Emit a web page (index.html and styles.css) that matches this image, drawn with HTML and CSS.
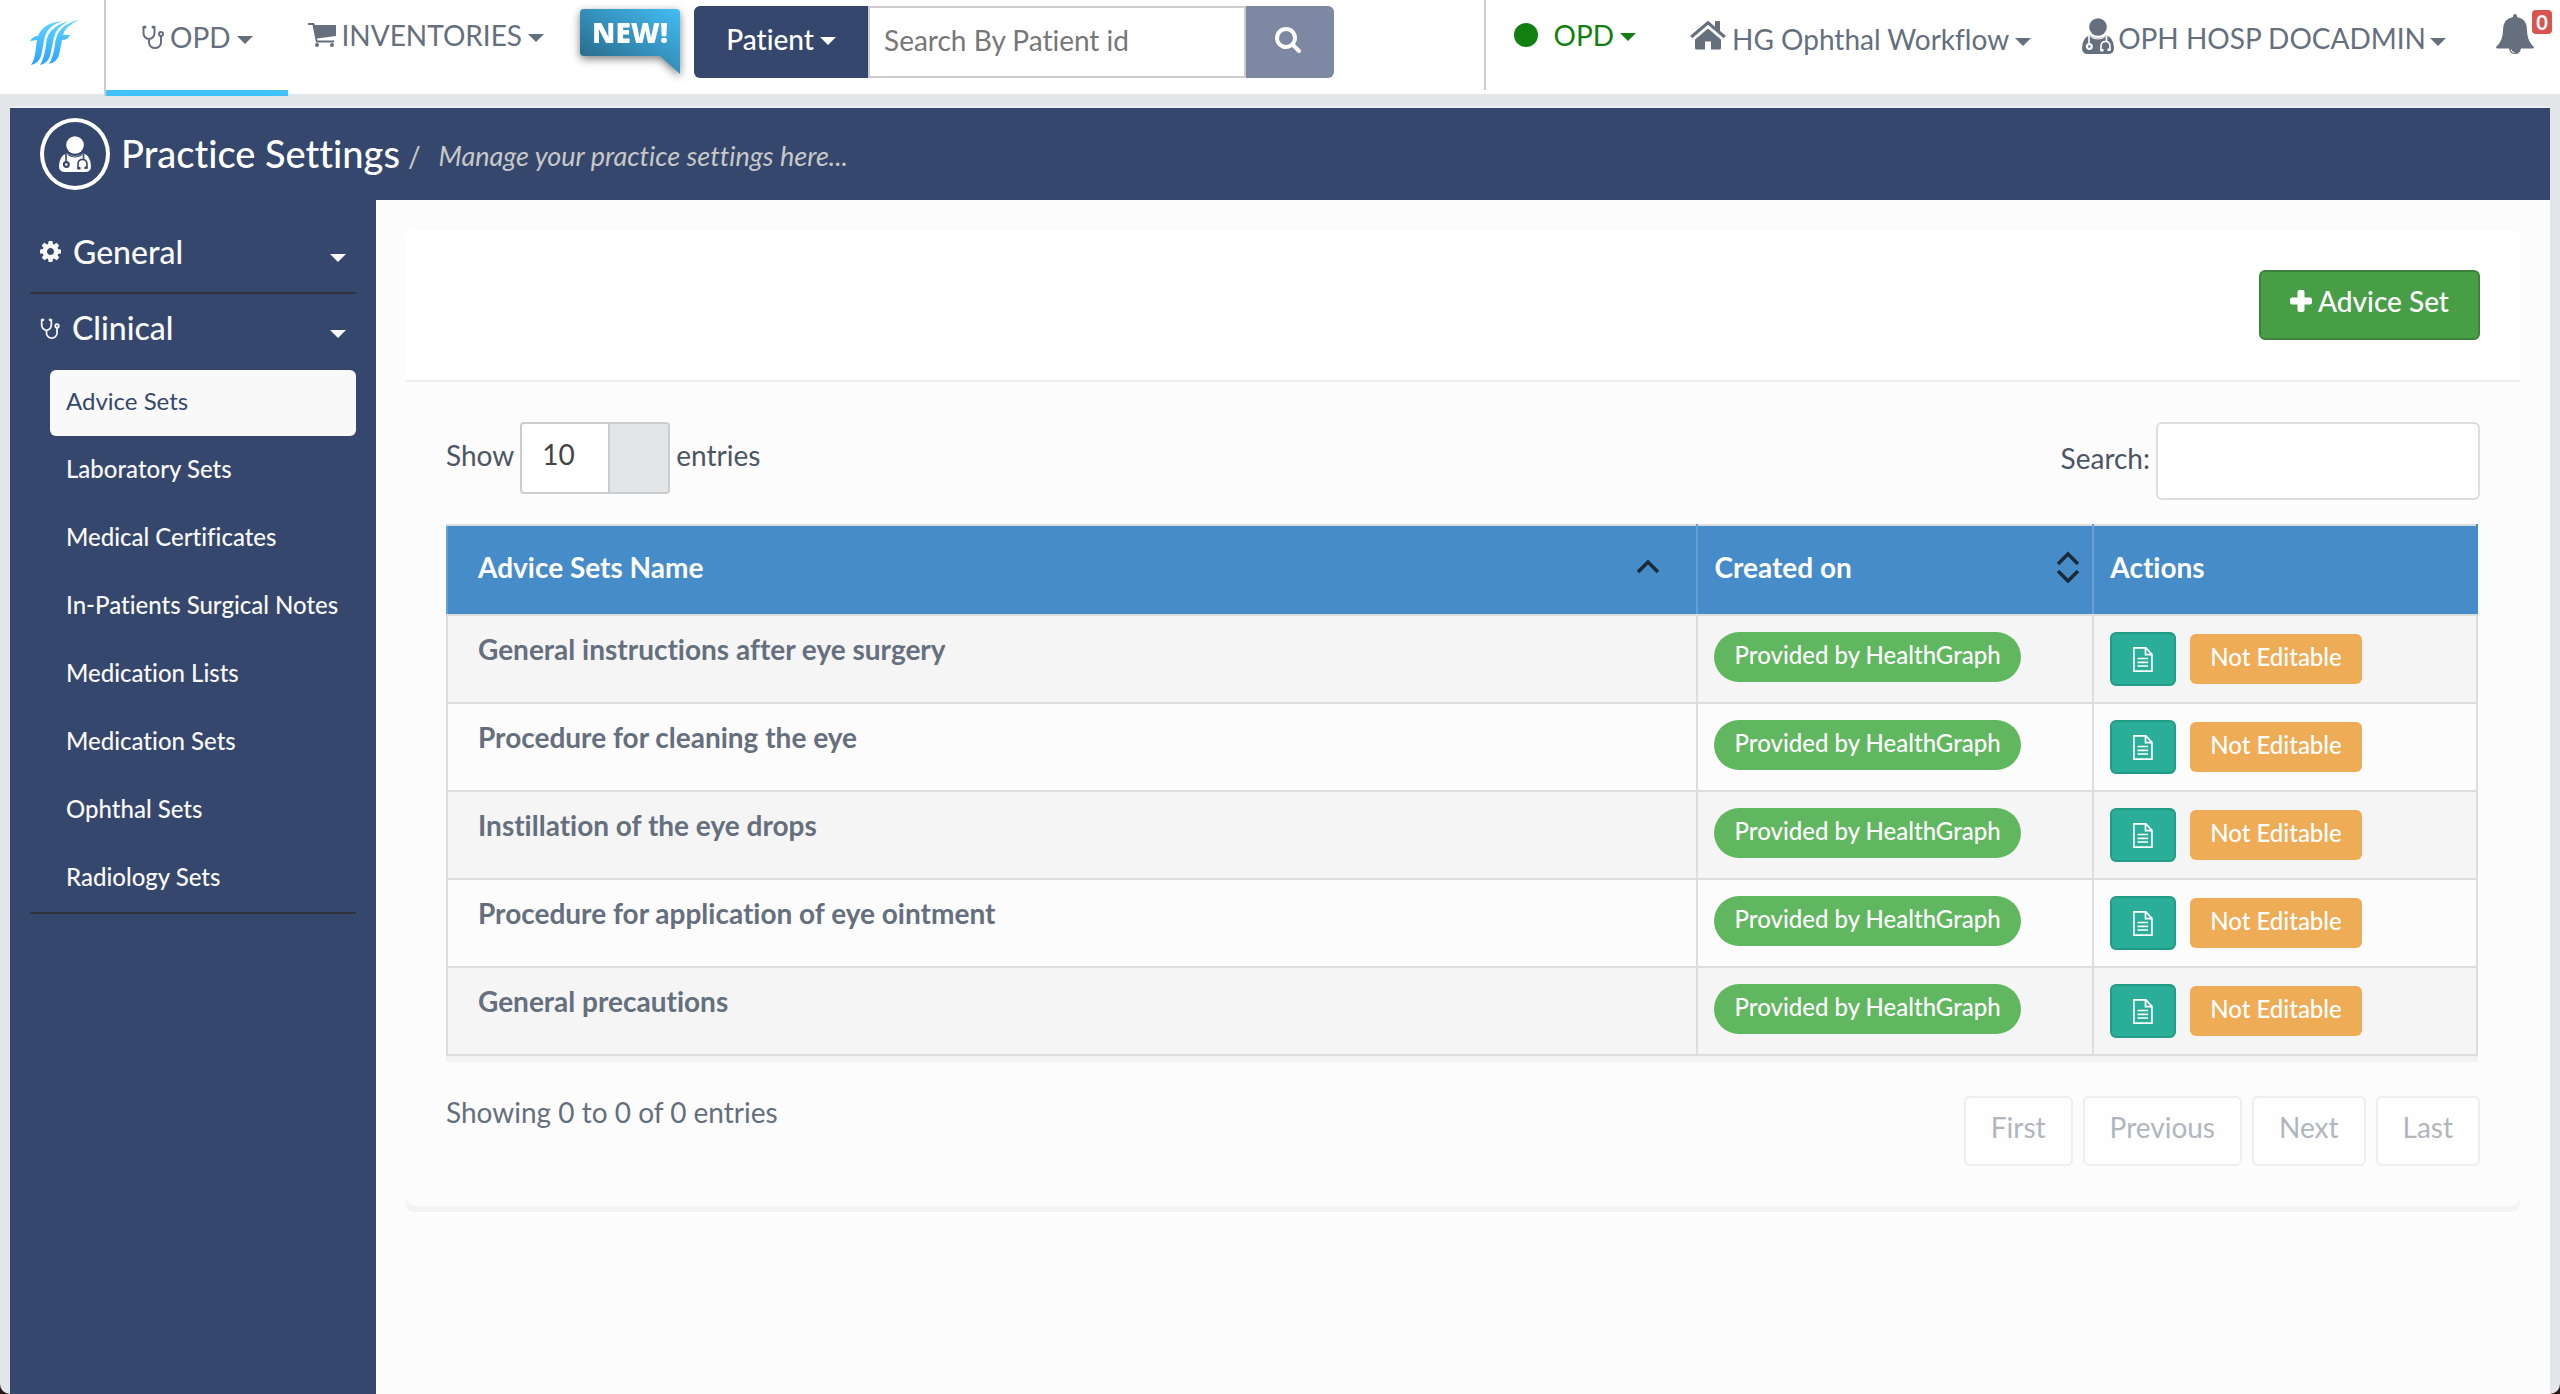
FILE: index.html
```html
<!DOCTYPE html>
<html lang="en">
<head>
<meta charset="utf-8">
<title>Practice Settings</title>
<link rel="stylesheet" href="styles.css">
</head>
<body>
<svg class="sprite" aria-hidden="true">
  <defs>
    <linearGradient id="logo-fill" x1="0" y1="0" x2="0" y2="1"><stop offset="0" stop-color="#5fd4ff"/><stop offset="1" stop-color="#2fa2ff"/></linearGradient>
    <linearGradient id="new-fill" x1="0" y1="1" x2="1" y2="0"><stop offset="0" stop-color="#26607c"/><stop offset="1" stop-color="#43bdf6"/></linearGradient>
  </defs>
  <symbol id="i-steth" viewBox="0 0 22 24">
    <g fill="none" stroke="currentColor" stroke-width="2" stroke-linecap="round">
      <path d="M3 2H1.500V8a5.500 6 0 0 0 11 0V2H11M7 14v3.500a6 5.500 0 0 0 12 0V11"/>
      <circle cx="19" cy="9" r="2"/>
    </g>
    <circle cx="3" cy="2" r="1.500" fill="currentColor"/><circle cx="11" cy="2" r="1.500" fill="currentColor"/>
  </symbol>
  <symbol id="i-cart" viewBox="0 0 28 24">
    <path fill="currentColor" d="M0 0h6l1 2h21v11L9 15.500l.5 2H26v2H8L4.500 2H0z"/>
    <circle cx="9" cy="22" r="2" fill="currentColor"/><circle cx="24" cy="22" r="2" fill="currentColor"/>
  </symbol>
  <symbol id="i-doctor" viewBox="0 0 32 36">
    <circle cx="16" cy="9" r="8.800" fill="currentColor"/>
    <path fill="currentColor" d="M8 17.500q3 2.500 8 2.500t8-2.500q7.500 1.500 8 12.500 0 6-6 6H6q-6 0-6-6 .5-11 8-12.500z"/>
    <g fill="none" stroke="var(--icon-bg)" stroke-width="1.600">
      <circle cx="7.300" cy="28.500" r="2.400" stroke-width="2.200"/>
      <path d="M7 18v8.500M24.500 18v5M19 33v-4.500q0-5 4.500-5t4.500 5V32"/>
      <path d="M20 31v2.500M27 30.500v2.500" stroke-width="3"/>
      <path d="M8.500 18.500q3 2.500 7.500 2.500t7.500-2.500" stroke-width="1"/>
    </g>
  </symbol>
  <symbol id="i-home" viewBox="0 0 36 30">
    <path fill="currentColor" d="M18 8.500 31 19.500V28q0 1.500-1.500 1.500H21v-8h-6v8H6.500Q5 29.500 5 28v-8.500z"/>
    <path fill="none" stroke="currentColor" stroke-width="3" d="M1.200 17 18 2.800 34.800 17"/>
    <path fill="currentColor" d="M25 1h5v11l-5-4.500z"/>
  </symbol>
  <symbol id="i-bell" viewBox="0 0 38 40">
    <path fill="currentColor" d="M19 0q2 0 2 3 10 1.500 10 13 0 11 7 17 0 1.500-2 1.500H2Q0 34.500 0 33q7-6 7-17Q7 4.500 17 3q0-3 2-3zM13 34.500h12q-1 5.500-6 5.500t-6-5.500z"/>
    <path fill="none" stroke="#fff" d="M15 35.500q.5 3 3.500 3"/>
  </symbol>
  <symbol id="i-search" viewBox="64 128 1664 1664">
    <path fill="currentColor" d="M1216 832q0-185-131.500-316.500t-316.500-131.500-316.500 131.500-131.500 316.500 131.500 316.500 316.500 131.500 316.500-131.500 131.500-316.500zm512 832q0 52-38 90t-90 38q-54 0-90-38l-343-342q-179 124-399 124-143 0-273.500-55.500t-225-150-150-225-55.500-273.500 55.500-273.500 150-225 225-150 273.500-55.500 273.500 55.500 225 150 150 225 55.500 273.500q0 220-124 399l343 343q37 37 37 90z"/>
  </symbol>
  <symbol id="i-cog" viewBox="128 128 1536 1536">
    <path fill="currentColor" d="M1152 896q0-106-75-181t-181-75-181 75-75 181 75 181 181 75 181-75 75-181zm512-109v222q0 12-8 23t-20 13l-185 28q-19 54-39 91 35 50 107 138 10 12 10 25t-9 23q-27 37-99 108t-94 71q-12 0-26-9l-138-108q-44 23-91 38-16 136-29 186-7 28-36 28h-222q-14 0-24.500-8.500t-11.500-21.500l-28-184q-49-16-90-37l-141 107q-10 9-25 9-14 0-25-11-126-114-165-168-7-10-7-23 0-12 8-23 15-21 51-66.500t54-70.500q-27-50-41-99l-183-27q-13-2-21-12.500t-8-23.500v-222q0-12 8-23t19-13l186-28q14-46 39-92-40-57-107-138-10-12-10-24 0-10 9-23 26-36 98.500-107.500t94.500-71.500q13 0 26 10l138 107q44-23 91-38 16-136 29-186 7-28 36-28h222q14 0 24.500 8.500t11.500 21.500l28 184q49 16 90 37l142-107q9-9 24-9 13 0 25 10 129 119 165 170 7 8 7 22 0 12-8 23-15 21-51 66.500t-54 70.500q26 50 41 98l183 28q13 2 21 12.500t8 23.500z"/>
  </symbol>
  <symbol id="i-plus" viewBox="0 0 22 22">
    <path fill="currentColor" d="M9.500 0h3q2 0 2 2v5.500H20q2 0 2 2v3q0 2-2 2h-5.500V20q0 2-2 2h-3q-2 0-2-2v-5.500H2q-2 0-2-2v-3q0-2 2-2h5.500V2q0-2 2-2z"/>
  </symbol>
  <symbol id="i-file" viewBox="0 0 22 25">
    <g fill="none" stroke="currentColor" stroke-width="1.700">
      <path d="M1.900.9h12l6 6.500v16.700h-18zM13.500 1v6.700H20M5.500 11.500h10.500M5.500 15.300h10.500M5.500 19h10.500"/>
    </g>
  </symbol>
  <symbol id="i-sort" viewBox="0 0 24 32">
    <path fill="none" stroke="#1b2a38" stroke-width="3.500" d="M2 13 12 3l10 10M2 20l10 10 10-10"/>
  </symbol>
  <symbol id="i-up" viewBox="0 0 24 32">
    <path fill="none" stroke="#1b2a38" stroke-width="3.500" d="M2 21 12 11l10 10"/>
  </symbol>
</svg>

<header class="topbar">
  <a class="brand" href="#" aria-label="Home">
    <svg width="50" height="46" viewBox="0 0 50 46" fill="url(#logo-fill)">
      <path d="M1 45q4-6 5-18l1-7-7 1q3-5 8-5Q13 3 32 1q-14 5-17 15l-4 20q-2 7-10 9z"/>
      <path d="M10 45q4-6 5-18 1-20 24-26-13 6-15 16l-4 19q-2 7-10 9z"/>
      <path d="M19 44q4-6 5-18Q27 4 49 0 35 6 33 15h7q-2 5-8 5l-3 15q-2 7-10 9z"/>
      <g fill="none" stroke="#fff"><path d="M9 44q6-8 7-24Q19 6 34 1M18 43q6-8 7-23Q28 6 42 1"/></g>
    </svg>
  </a>
  <nav class="mainnav">
    <a class="nav-item active" href="#"><svg width="22" height="24"><use href="#i-steth"/></svg>OPD<span class="caret"></span></a>
    <a class="nav-item inventories" href="#"><svg width="28" height="24"><use href="#i-cart"/></svg>INVENTORIES<span class="caret"></span></a>
    <a class="new-flag" href="#">
      <svg width="100" height="65" viewBox="0 0 100 65"><path fill="url(#new-fill)" d="M4 0h92q4 0 4 4v61L80 47H4q-4 0-4-4V4q0-4 4-4z"/></svg>
      <span>NEW!</span>
    </a>
  </nav>
  <form class="patient-search">
    <button class="btn-patient" type="button">Patient<span class="caret"></span></button>
    <input type="text" placeholder="Search By Patient id" aria-label="Search By Patient id">
    <button class="btn-search" type="submit" aria-label="Search"><svg width="26" height="26"><use href="#i-search"/></svg></button>
  </form>
  <div class="account">
    <a class="status" href="#"><span class="dot"></span>OPD<span class="caret"></span></a>
    <a class="clinic" href="#"><svg width="36" height="30"><use href="#i-home"/></svg>HG Ophthal Workflow<span class="caret"></span></a>
    <a class="user" href="#"><svg width="32" height="36"><use href="#i-doctor"/></svg>OPH HOSP DOCADMIN<span class="caret"></span></a>
    <a class="alerts" href="#" aria-label="Notifications"><svg width="38" height="40"><use href="#i-bell"/></svg><span class="count">0</span></a>
  </div>
</header>

<div class="page">
  <div class="titlebar">
    <span class="avatar"><svg width="32" height="36"><use href="#i-doctor"/></svg></span>
    <h1>Practice Settings</h1>
    <span class="slash">/</span>
    <p>Manage your practice settings here...</p>
  </div>
  <div class="body">
    <aside class="sidebar">
      <button class="group" type="button"><svg width="21" height="21"><use href="#i-cog"/></svg>General<span class="caret"></span></button>
      <section class="open">
        <button class="group" type="button"><svg width="20" height="21"><use href="#i-steth"/></svg>Clinical<span class="caret"></span></button>
        <ul>
          <li><a class="current" href="#">Advice Sets</a></li>
          <li><a href="#">Laboratory Sets</a></li>
          <li><a href="#">Medical Certificates</a></li>
          <li><a href="#">In-Patients Surgical Notes</a></li>
          <li><a href="#">Medication Lists</a></li>
          <li><a href="#">Medication Sets</a></li>
          <li><a href="#">Ophthal Sets</a></li>
          <li><a href="#">Radiology Sets</a></li>
        </ul>
      </section>
    </aside>
    <main>
      <div class="panel">
        <div class="panel-head">
          <button class="btn-add" type="button"><svg width="22" height="22"><use href="#i-plus"/></svg>Advice Set</button>
        </div>
        <div class="panel-body">
          <div class="tools">
            <label><span>Show</span><select><option>10</option><option>25</option><option>50</option></select><span>entries</span></label>
            <label><span>Search:</span><input type="search"></label>
          </div>
          <table>
            <thead>
              <tr>
                <th class="col-name"><div>Advice Sets Name<svg width="24" height="32"><use href="#i-up"/></svg></div></th>
                <th class="col-created"><div>Created on<svg width="24" height="32"><use href="#i-sort"/></svg></div></th>
                <th class="col-actions"><div>Actions</div></th>
              </tr>
            </thead>
            <tbody>
              <tr><td>General instructions after eye surgery</td><td><span class="source">Provided by HealthGraph</span></td><td><div class="actions"><button type="button" aria-label="View"><svg width="22" height="25"><use href="#i-file"/></svg></button><span class="locked">Not Editable</span></div></td></tr>
              <tr><td>Procedure for cleaning the eye</td><td><span class="source">Provided by HealthGraph</span></td><td><div class="actions"><button type="button" aria-label="View"><svg width="22" height="25"><use href="#i-file"/></svg></button><span class="locked">Not Editable</span></div></td></tr>
              <tr><td>Instillation of the eye drops</td><td><span class="source">Provided by HealthGraph</span></td><td><div class="actions"><button type="button" aria-label="View"><svg width="22" height="25"><use href="#i-file"/></svg></button><span class="locked">Not Editable</span></div></td></tr>
              <tr><td>Procedure for application of eye ointment</td><td><span class="source">Provided by HealthGraph</span></td><td><div class="actions"><button type="button" aria-label="View"><svg width="22" height="25"><use href="#i-file"/></svg></button><span class="locked">Not Editable</span></div></td></tr>
              <tr><td>General precautions</td><td><span class="source">Provided by HealthGraph</span></td><td><div class="actions"><button type="button" aria-label="View"><svg width="22" height="25"><use href="#i-file"/></svg></button><span class="locked">Not Editable</span></div></td></tr>
            </tbody>
          </table>
          <div class="foot">
            <p>Showing 0 to 0 of 0 entries</p>
            <div class="pager">
              <button type="button" disabled>First</button>
              <button type="button" disabled>Previous</button>
              <button type="button" disabled>Next</button>
              <button type="button" disabled>Last</button>
            </div>
          </div>
        </div>
      </div>
    </main>
  </div>
</div>
</body>
</html>
```
FILE: styles.css
```css
:root {
  --navy: #35476d;
  --slate: #656f7d;
  --line: #dddddd;
  --mist: #e2e6e9;
  --icon-bg: #ffffff;
}

* { box-sizing: border-box; }

html { background: #2a1a16; }

body {
  margin: 0;
  min-height: 100vh;
  display: flex;
  flex-direction: column;
  background: var(--mist);
  border-radius: 0 0 10px 10px;
  overflow: hidden;
  font-family: Lato, "Liberation Sans", sans-serif;
  font-size: 28px;
  line-height: 32px;
  font-variant-ligatures: none;
  color: var(--slate);
}

.sprite { position: absolute; width: 0; height: 0; }

a { color: inherit; text-decoration: none; }
button, input, select { font: inherit; font-variant-ligatures: none; color: inherit; }
button { cursor: pointer; border: 0; background: none; padding: 0; }
svg { flex: none; display: block; }
h1, p, ul { margin: 0; padding: 0; }

.caret {
  flex: none;
  width: 16px;
  border: 8px solid transparent;
  border-top-color: currentColor;
  border-bottom: 0;
}

/* Top bar */
.topbar {
  display: flex;
  align-items: flex-start;
  height: 94px;
  background: #fff;
}

.brand {
  width: 106px;
  height: 96px;
  padding: 20px 0 0 30px;
  border-right: 2px solid #ccc;
}

.mainnav { display: flex; align-items: flex-start; }

.nav-item { display: flex; align-items: center; gap: 6px; height: 96px; padding: 0 35px 22px 36px; }
.nav-item.active { border-bottom: 6px solid #42c2fb; padding-bottom: 16px; }
.nav-item.inventories { padding: 0 36px 26px 20px; }
.nav-item .caret { margin-top: 6px; }

.new-flag {
  display: grid;
  margin-top: 9px;
  filter: drop-shadow(0 3px 4px rgba(0, 0, 0, .5));
  color: #fff;
  font: 800 28px/46px "Open Sans", sans-serif;
  text-align: center;
}
.new-flag > * { grid-area: 1 / 1; }

.patient-search {
  display: flex;
  width: 640px;
  height: 72px;
  margin: 6px 0 0 14px;
}
.btn-patient {
  display: flex;
  align-items: center;
  justify-content: center;
  gap: 6px;
  width: 174px;
  padding-bottom: 6px;
  border-radius: 6px 0 0 6px;
  background: var(--navy);
  color: #fff;
  font-weight: 500;
}
.btn-patient .caret { margin-top: 4px; }
.patient-search input {
  flex: 1;
  min-width: 0;
  padding: 0 14px 4px;
  border: 2px solid #ccc;
  background: #fff;
}
.patient-search input::placeholder { color: #777; opacity: 1; }
.btn-search {
  display: grid;
  place-items: center;
  width: 88px;
  padding: 0 4px 4px 0;
  border-radius: 0 6px 6px 0;
  background: #7e88a3;
  color: #fff;
}

.account {
  display: flex;
  align-items: flex-start;
  margin-left: auto;
  height: 90px;
  padding: 0 8px 0 28px;
  border-left: 2px solid #ccc;
}
.account a { display: flex; align-items: center; gap: 6px; }
.status { color: #118011; padding-top: 19px; margin-right: 54px; }
.status .caret { margin-top: 4px; }
.dot { width: 24px; height: 24px; margin-right: 10px; border-radius: 50%; background: currentColor; }
.account .clinic { align-items: baseline; padding-top: 20px; margin-right: 51px; }
.clinic .caret { align-self: center; margin-top: 8px; }
.account .user { align-items: flex-end; gap: 4px; padding-top: 18px; margin-right: 50px; }
.user .caret { margin-bottom: 8px; }
.account .alerts { position: relative; gap: 0; width: 56px; padding-top: 14px; }
.count {
  position: absolute;
  top: 10px;
  right: 0;
  width: 20px;
  border-radius: 4px;
  background: #d9534f;
  color: #fff;
  font-size: 20px;
  font-weight: 700;
  line-height: 24px;
  text-align: center;
}

/* Title bar */
.page {
  flex: 1;
  display: flex;
  flex-direction: column;
  margin: 12px 10px 0;
  border-top: 2px solid #eceeef;
}
.titlebar {
  --icon-bg: var(--navy);
  display: flex;
  align-items: center;
  height: 92px;
  padding: 0 30px;
  background: var(--navy);
  color: #fff;
}
.avatar {
  display: grid;
  place-items: center;
  width: 70px;
  height: 72px;
  margin-right: 11px;
  border: 4px solid #fff;
  border-radius: 50%;
}
.titlebar h1 { padding-bottom: 2px; font-size: 38px; font-weight: 500; }
.slash, .titlebar p { padding-top: 4px; color: #c8c8c8; }
.slash { margin: 0 18px 0 8px; }
.titlebar p { font-size: 27px; font-style: italic; }

/* Sidebar */
.body { flex: 1; display: flex; }
.sidebar {
  --icon-bg: var(--navy);
  flex: none;
  width: 366px;
  padding: 16px 20px;
  background: var(--navy);
  color: #f9f9f9;
  font-weight: 500;
}
.group {
  display: flex;
  align-items: center;
  gap: 12px;
  width: 100%;
  height: 78px;
  padding: 0 10px 5px;
  border-bottom: 2px solid #30333d;
  font-size: 32px;
}
.group .caret { margin: 12px 0 0 auto; }
.open { border-bottom: 2px solid #30333d; }
.open .group { height: 76px; padding-bottom: 8px; border-bottom: 0; }
.sidebar ul { list-style: none; margin-left: 20px; }
.sidebar li a {
  display: block;
  height: 66px;
  margin-bottom: 2px;
  padding: 15px 16px;
  border-radius: 6px;
  font-size: 24px;
}
.sidebar li:last-child a { margin-bottom: 0; }
.sidebar .current { background: #f9f9f9; color: var(--navy); font-weight: 400; }

/* Content panel */
main { flex: 1; min-width: 0; padding: 30px; background: #fcfcfc; }
.panel { border-radius: 8px; box-shadow: 0 6px 0 #f3f3f3; background: #fcfcfc; }
.panel-head {
  display: flex;
  justify-content: flex-end;
  padding: 40px;
  border-bottom: 2px solid #eee;
  border-radius: 8px 8px 0 0;
  background: #fff;
}
.btn-add {
  display: flex;
  align-items: center;
  gap: 6px;
  height: 70px;
  padding: 0 29px 8px;
  border: 2px solid #3b833b;
  border-radius: 6px;
  background: #489d47;
  color: #fff;
  font-weight: 500;
}
.panel-body { padding: 40px; color: #4b5563; }

.tools { display: flex; justify-content: space-between; align-items: flex-start; margin-bottom: 24px; }
.tools label { display: flex; align-items: center; gap: 6px; }
.tools span { padding-bottom: 6px; }
.tools select {
  appearance: none;
  width: 150px;
  height: 72px;
  padding: 0 20px 8px;
  border: 2px solid #ccc;
  border-radius: 4px;
  background: linear-gradient(90deg, #fff 86px, #ccc 86px 88px, var(--mist) 88px);
  color: #444;
}
.tools input {
  width: 324px;
  height: 78px;
  padding: 0 16px;
  border: 2px solid var(--line);
  border-radius: 6px;
  background: #fff;
}

table {
  width: calc(100% - 2px);
  border-collapse: collapse;
  table-layout: fixed;
  box-shadow: 0 6px 0 #f3f3f3;
}
th, td { height: 88px; padding: 16px; text-align: left; vertical-align: top; border: 2px solid var(--line); }
th:first-child, td:first-child { padding-left: 30px; }
td:first-child { padding-top: 17px; }
th { height: 90px; padding: 25px 12px 16px 16px; background: #468cc8; color: #fff; border-color: var(--line) #64a0d4; }
th:first-child { padding-right: 36px; }
th:last-child { border-right-color: #468cc8; }
th div { display: flex; align-items: center; justify-content: space-between; }
/* widths include the collapsed borders */
.col-name { width: 61.6%; }
.col-created { width: 19.5%; }
.col-actions { width: 18.9%; }
td { color: var(--slate); font-weight: 700; }
tbody tr:nth-child(odd) { background: #f5f5f5; }

.source, .locked {
  display: block;
  width: max-content;
  height: 50px;
  padding: 7px 20px;
  color: #fff;
  font-size: 24px;
  font-weight: 500;
}
.source { border-radius: 25px; background: #60b760; }
.locked { border-radius: 6px; background: #efac57; }
.actions { display: flex; align-items: center; gap: 14px; }
.actions button {
  display: grid;
  place-items: center;
  width: 66px;
  height: 54px;
  border: 2px solid #239b87;
  border-radius: 6px;
  background: #2aae99;
  color: #fff;
}

.foot { display: flex; justify-content: space-between; align-items: flex-start; padding-top: 40px; color: var(--slate); }
.pager { display: flex; gap: 10px; }
.pager button {
  height: 70px;
  padding: 0 25px 8px;
  border: 2px solid #eee;
  border-radius: 6px;
  background: #fefefe;
  color: #b1b6bd;
}
```
